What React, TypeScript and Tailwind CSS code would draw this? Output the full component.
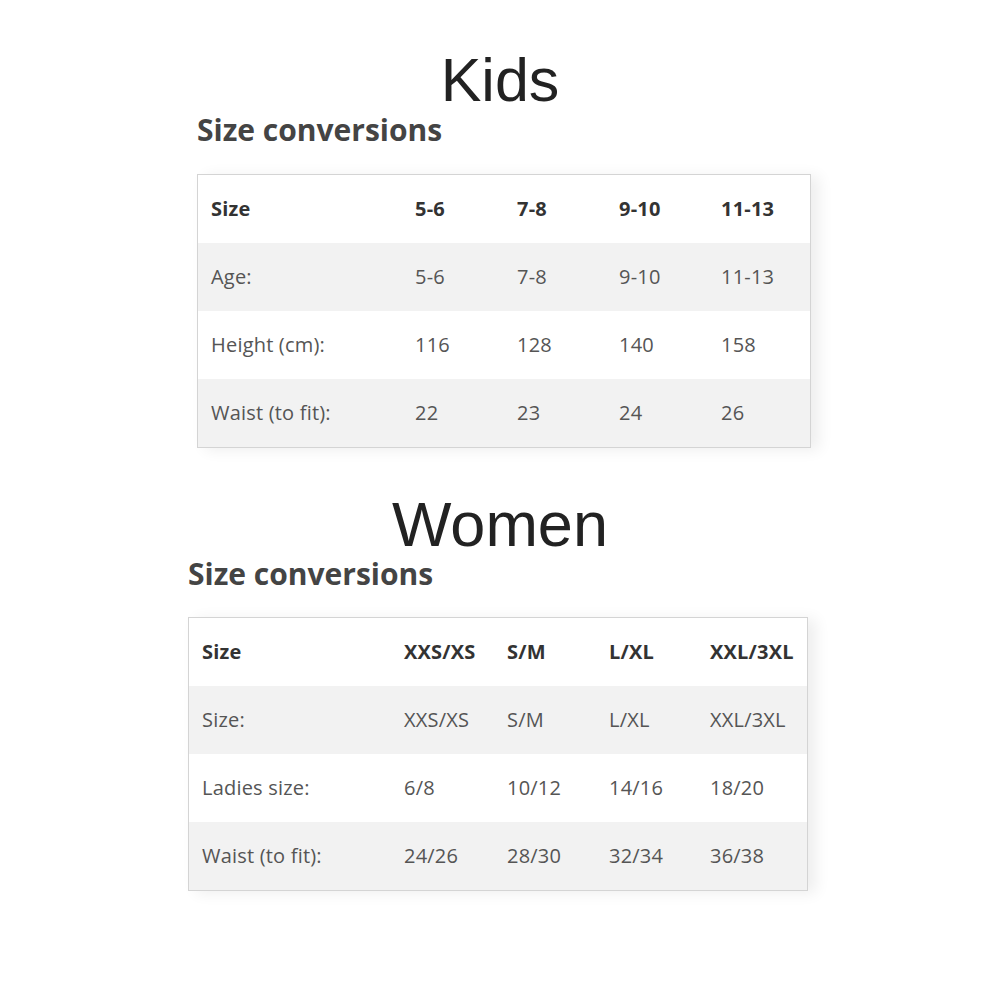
const kids = {
  head: ["Size", "5-6", "7-8", "9-10", "11-13"],
  rows: [
    ["Age:", "5-6", "7-8", "9-10", "11-13"],
    ["Height (cm):", "116", "128", "140", "158"],
    ["Waist (to fit):", "22", "23", "24", "26"],
  ],
};

const women = {
  head: ["Size", "XXS/XS", "S/M", "L/XL", "XXL/3XL"],
  rows: [
    ["Size:", "XXS/XS", "S/M", "L/XL", "XXL/3XL"],
    ["Ladies size:", "6/8", "10/12", "14/16", "18/20"],
    ["Waist (to fit):", "24/26", "28/30", "32/34", "36/38"],
  ],
};

type Data = { head: string[]; rows: string[][] };

const SizeTable = ({ data, cols }: { data: Data; cols: string }) => (
  <div className="border border-[#d4d4d4] bg-white shadow-[8px_2px_14px_rgba(0,0,0,0.07)]">
    <div className={`grid ${cols} h-[68px] items-center font-bold text-[#333]`}>
      {data.head.map((c, i) => (
        <div key={i} className="pl-[13px] whitespace-nowrap">
          {c}
        </div>
      ))}
    </div>
    {data.rows.map((r, ri) => (
      <div
        key={ri}
        className={`grid ${cols} h-[68px] items-center text-[#555] ${
          ri % 2 === 0 ? "bg-[#f2f2f2]" : "bg-white"
        }`}
      >
        {r.map((c, i) => (
          <div key={i} className="pl-[13px] whitespace-nowrap">
            {c}
          </div>
        ))}
      </div>
    ))}
  </div>
);

export default function App() {
  return (
    <div className="w-[1000px] h-[1000px] bg-white font-['Open_Sans',sans-serif] text-[20px] tracking-[0.2px]">
      <div className="pt-[50px] text-center font-['Liberation_Sans',Arial,sans-serif] text-[61px] leading-none tracking-normal text-[#222]">
        Kids
      </div>
      <div className="ml-[197px] w-[614px]">
        <h2 className="mt-[4px] text-[30px] leading-none font-bold tracking-normal text-[#444]">
          Size conversions
        </h2>
        <div className="mt-[29px]">
          <SizeTable data={kids} cols="grid-cols-[204px_102px_102px_102px_102px]" />
        </div>
      </div>

      <div className="mt-[45px] text-center font-['Liberation_Sans',Arial,sans-serif] text-[63px] leading-none tracking-normal text-[#222]">
        Women
      </div>
      <div className="ml-[188px] w-[620px]">
        <h2 className="mt-[3px] text-[30px] leading-none font-bold tracking-normal text-[#444]">
          Size conversions
        </h2>
        <div className="mt-[28px]">
          <SizeTable data={women} cols="grid-cols-[202px_103px_102px_101px_1fr]" />
        </div>
      </div>
    </div>
  );
}
